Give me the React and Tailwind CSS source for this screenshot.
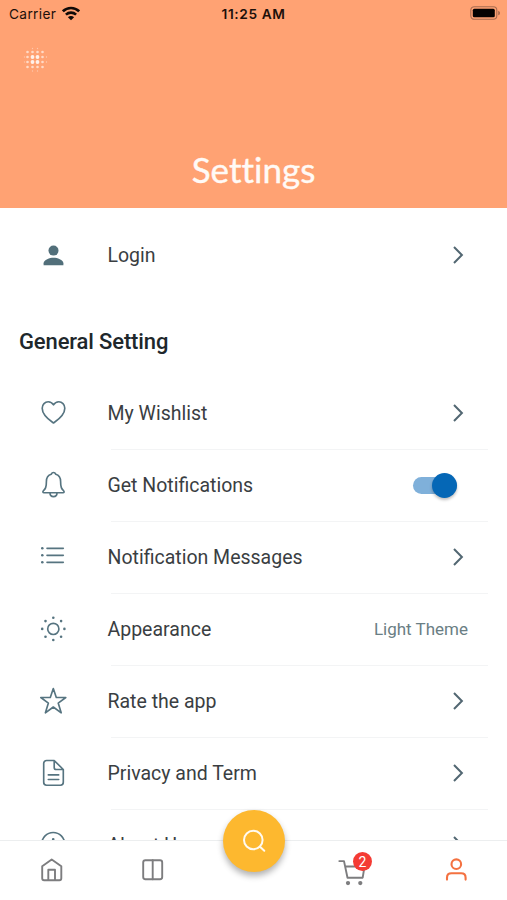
import React from 'react';

const line = { fill: 'none', stroke: '#567480', strokeWidth: 1.65, strokeLinecap: 'round', strokeLinejoin: 'round' };

function Icon({ children }) {
  return (
    <svg className="ml-[39px] h-[29px] w-[29px] shrink-0" viewBox="0 0 29 29" {...line}>
      {children}
    </svg>
  );
}

const PersonIcon = () => (
  <Icon>
    <g fill="#526f7a" stroke="none">
      <circle cx="14.5" cy="9.6" r="5" />
      <path d="M4.6 24.3v-2c0-3.7 6.2-5.6 9.9-5.6s9.900 1.900 9.900 5.600v2z" />
    </g>
  </Icon>
);

const HeartIcon = () => (
  <Icon>
    <path d="M14.500 24C11 21.500 3.200 16.500 3.200 9.200C3.200 5.500 6 2.700 9.200 2.700C11.500 2.700 13.300 3.900 14.500 5.900C15.700 3.900 17.500 2.700 19.800 2.700C23 2.700 25.800 5.500 25.800 9.200C25.800 16.500 18 21.500 14.500 24Z" />
  </Icon>
);

const BellIcon = () => (
  <Icon>
    <path d="M14.500 1.500C12.900 1.500 12.500 2.700 12.300 3.200C8.900 4.100 7.400 7 7.400 10.500C7.400 16.500 6.400 17.700 4.400 19.800C3.500 20.800 3.900 21.700 5 21.700H24C25.100 21.700 25.500 20.800 24.600 19.800C22.600 17.700 21.600 16.500 21.600 10.500C21.600 7 20.100 4.100 16.700 3.200C16.500 2.700 16.100 1.500 14.500 1.500ZM11 22C11 24.200 12.500 25.600 14.500 25.600S18 24.200 18 22" />
  </Icon>
);

const ListIcon = () => (
  <Icon>
    <path d="M8 5.300H24.300M8 12.300H24.300M8 19.300H24.300" />
    <g fill="#567480" stroke="none">
      <circle cx="3.300" cy="5.300" r="1.300" />
      <circle cx="3.300" cy="12.300" r="1.300" />
      <circle cx="3.300" cy="19.300" r="1.300" />
    </g>
  </Icon>
);

const SunIcon = () => (
  <Icon>
    <circle cx="14.300" cy="13.900" r="5.600" />
    <g fill="#567480" stroke="none">
      <circle cx="14.300" cy="2.800" r="1.300" />
      <circle cx="14.300" cy="25" r="1.300" />
      <circle cx="3.200" cy="13.900" r="1.300" />
      <circle cx="25.400" cy="13.900" r="1.300" />
      <circle cx="6.500" cy="6.100" r="1.300" />
      <circle cx="22.100" cy="6.100" r="1.300" />
      <circle cx="6.500" cy="21.700" r="1.300" />
      <circle cx="22.100" cy="21.700" r="1.300" />
    </g>
  </Icon>
);

const StarIcon = () => (
  <Icon>
    <path d="M14.300 1.600L17.300 10.500H26.800L19.200 16.100L22.200 25.800L14.300 20L6.400 25.800L9.400 16.100L1.800 10.500H11.300Z" />
  </Icon>
);

const DocIcon = () => (
  <Icon>
    <path d="M15.200 1.500H7.600C5.900 1.500 4.700 2.700 4.700 4.400V23.300C4.700 25 5.900 26.200 7.600 26.200H21.400C23.100 26.200 24.300 25 24.300 23.300V10.500ZM15.200 1.500V8.400C15.200 9.800 15.900 10.500 17.300 10.500H24.300M9.300 15.900H19.700M9.300 20.500H19.700" />
  </Icon>
);

const InfoIcon = () => (
  <Icon>
    <circle cx="14.200" cy="13" r="11.500" />
    <path d="M14.200 13V20" />
    <circle cx="14.200" cy="8.200" r="1.300" fill="#567480" stroke="none" />
  </Icon>
);

const Chevron = () => (
  <svg className="mr-[40px] h-[21px] w-[17px] shrink-0" viewBox="0 0 17 21" fill="none" stroke="#526772" strokeWidth="2">
    <path d="M4 2L11.900 10L4 18" />
  </svg>
);

const Toggle = () => (
  <div className="mr-[50px] flex h-[17px] w-[44px] items-center justify-end rounded-full bg-[#7fb0da]">
    <div className="h-[25px] w-[25px] shrink-0 rounded-full bg-[#0567b6] shadow-[0_2px_3px_rgba(0,0,0,0.25)]" />
  </div>
);

function Row({ icon, label, children, first }) {
  return (
    <div className="relative flex h-[72px] shrink-0 items-center pt-px">
      {!first && <div className="absolute left-[111px] right-[19px] top-0 h-px bg-[#f3f4f5]" />}
      {icon}
      <div className="ml-[39.500px] flex-1 whitespace-nowrap text-[19.500px] leading-6 text-[#3a3e42]">{label}</div>
      {children}
    </div>
  );
}

const dots = [];
[27.500, 32.500, 37.500, 42.500].forEach((x, i) => {
  [52, 57, 62, 67].forEach((y, j) => {
    const inner = (i === 1 || i === 2) && (j === 1 || j === 2);
    dots.push([x, y, inner ? 1.900 : 1.300, inner ? 0.850 : 0.600]);
  });
});
[32.500, 37.500].forEach((x) => dots.push([x, 48.500, 0.700, 0.400], [x, 71, 0.700, 0.400]));
[57, 62].forEach((y) => dots.push([24.500, y, 0.700, 0.350], [46.500, y, 0.700, 0.450]));

function Header() {
  return (
    <header className="flex h-[208px] shrink-0 flex-col bg-[#ffa273]">
      <div className="grid h-[28px] grid-cols-3 items-center text-[#1c100b]">
        <div className="flex items-center gap-[6px] pl-[9px]">
          <span className="w-[47px] whitespace-nowrap font-['Inter',sans-serif] text-[13.700px] leading-4 tracking-[0.350px]">Carrier</span>
          <svg className="h-[15px] w-[18px] -translate-y-px" viewBox="0 0 18 15">
            <g fill="none" stroke="#100a08" strokeWidth="2.600">
              <path d="M0.900 5.300C5.500 0.800 12.500 0.800 17.100 5.300" />
              <path d="M3.900 8.600C6.800 5.900 11.200 5.900 14.100 8.600" />
            </g>
            <path d="M9 14.300L5.900 11.200C7.600 9.700 10.400 9.700 12.100 11.200Z" fill="#100a08" />
          </svg>
        </div>
        <div className="text-center font-['Inter',sans-serif] text-[13.700px] font-semibold leading-4 tracking-[0.600px]">11:25 AM</div>
        <svg className="mr-[6px] h-[14px] w-[31px] -translate-y-px justify-self-end" viewBox="0 0 31 14">
          <rect x="0.800" y="0.700" width="26" height="12.600" rx="3.500" fill="none" stroke="#a86c50" strokeWidth="1.100" />
          <rect x="2.800" y="2.700" width="22" height="8.600" rx="1.500" fill="#050302" />
          <path d="M28.200 4.700C30.600 5.500 30.600 8.500 28.200 9.300Z" fill="#a86c50" />
        </svg>
      </div>
      <svg className="ml-[22px] mt-[18px] h-[28px] w-[28px]" viewBox="22 46 28 28" fill="#fff">
        {dots.map(([x, y, r, o]) => (
          <circle key={`${x}-${y}`} cx={x} cy={y} r={r} opacity={o} />
        ))}
      </svg>
      <h1 className="mt-[73px] text-center font-['Lato',sans-serif] text-[35px] font-normal leading-[44px] text-[#fffaf6] [-webkit-text-stroke:0.4px_#fffaf6] [font-variant-ligatures:none]">Settings</h1>
    </header>
  );
}

function BottomNav() {
  const gray = { fill: 'none', stroke: '#7d7d7f', strokeWidth: 1.900, strokeLinejoin: 'round', strokeLinecap: 'round' };
  return (
    <nav className="relative flex h-[60px] shrink-0 items-start border-t border-[#eceeef] bg-white pt-[15px]">
      <svg className="ml-[38px] h-[28px] w-[28px]" viewBox="0 0 28 28" {...gray}>
        <path d="M4.200 10.200L13.700 3.500L23.300 10.200V22.300C23.300 23.500 22.600 24.200 21.400 24.200H6.100C4.900 24.200 4.200 23.500 4.200 22.300ZM10.300 24V13.700H17V24" />
      </svg>
      <svg className="ml-[73px] h-[28px] w-[28px]" viewBox="0 0 28 28" {...gray}>
        <rect x="4.200" y="4.200" width="19" height="19" rx="2.200" />
        <path d="M13.700 4.200V23.200" />
      </svg>
      <button aria-label="Search" className="absolute left-[223px] top-[-31px] flex h-[62px] w-[62px] items-center justify-center rounded-full bg-[#fdb82f] shadow-[0_4px_6px_rgba(0,0,0,0.3)]">
        <svg className="h-[26px] w-[26px]" viewBox="0 0 26 26" fill="none" stroke="#fffaf0" strokeWidth="2" strokeLinecap="round">
          <circle cx="12.300" cy="12" r="9.300" />
          <path d="M19 18.700L23.300 22.700" />
        </svg>
      </button>
      <div className="relative ml-[169px] h-[34px] w-[40px]">
        <svg className="h-[34px] w-[34px]" viewBox="0 0 34 34" {...gray}>
          <path d="M3.300 5.100H8L11.500 21.700H26.700L28.500 10.500H9.300" />
          <circle cx="12" cy="27.100" r="1.200" fill="#7d7d7f" />
          <circle cx="24.300" cy="27.100" r="1.200" fill="#7d7d7f" />
        </svg>
        <span className="absolute left-[17px] top-[-4px] flex h-[19px] w-[19px] items-center justify-center rounded-full bg-[#f43b34] text-[14px] leading-none text-white">2</span>
      </div>
      <svg className="ml-[66px] h-[28px] w-[28px]" viewBox="0 0 28 28" fill="none" stroke="#f47140" strokeWidth="2.100" strokeLinecap="round">
        <circle cx="14.300" cy="8.200" r="4.800" />
        <path d="M5 23.600V21.700C5 18.900 6.800 17.300 9.500 17.300H19.100C21.800 17.300 23.600 18.900 23.600 21.700V23.600" />
      </svg>
    </nav>
  );
}

export default function App() {
  return (
    <div className="flex h-[900px] w-[507px] flex-col overflow-hidden bg-white font-['Roboto',sans-serif]">
      <Header />
      <main className="flex min-h-0 flex-1 flex-col overflow-hidden pt-[11px]">
        <Row first icon={<PersonIcon />} label="Login"><Chevron /></Row>
        <h2 className="mb-[22px] mt-[37px] shrink-0 pl-[19px] text-[22px] font-medium leading-[27px] tracking-[-0.130px] text-[#20272b]">General Setting</h2>
        <Row first icon={<HeartIcon />} label="My Wishlist"><Chevron /></Row>
        <Row icon={<BellIcon />} label="Get Notifications"><Toggle /></Row>
        <Row icon={<ListIcon />} label="Notification Messages"><Chevron /></Row>
        <Row icon={<SunIcon />} label="Appearance">
          <span className="mr-[39px] text-[17px] text-[#6a7e84]">Light Theme</span>
        </Row>
        <Row icon={<StarIcon />} label="Rate the app"><Chevron /></Row>
        <Row icon={<DocIcon />} label="Privacy and Term"><Chevron /></Row>
        <Row icon={<InfoIcon />} label="About Us"><Chevron /></Row>
      </main>
      <BottomNav />
    </div>
  );
}
